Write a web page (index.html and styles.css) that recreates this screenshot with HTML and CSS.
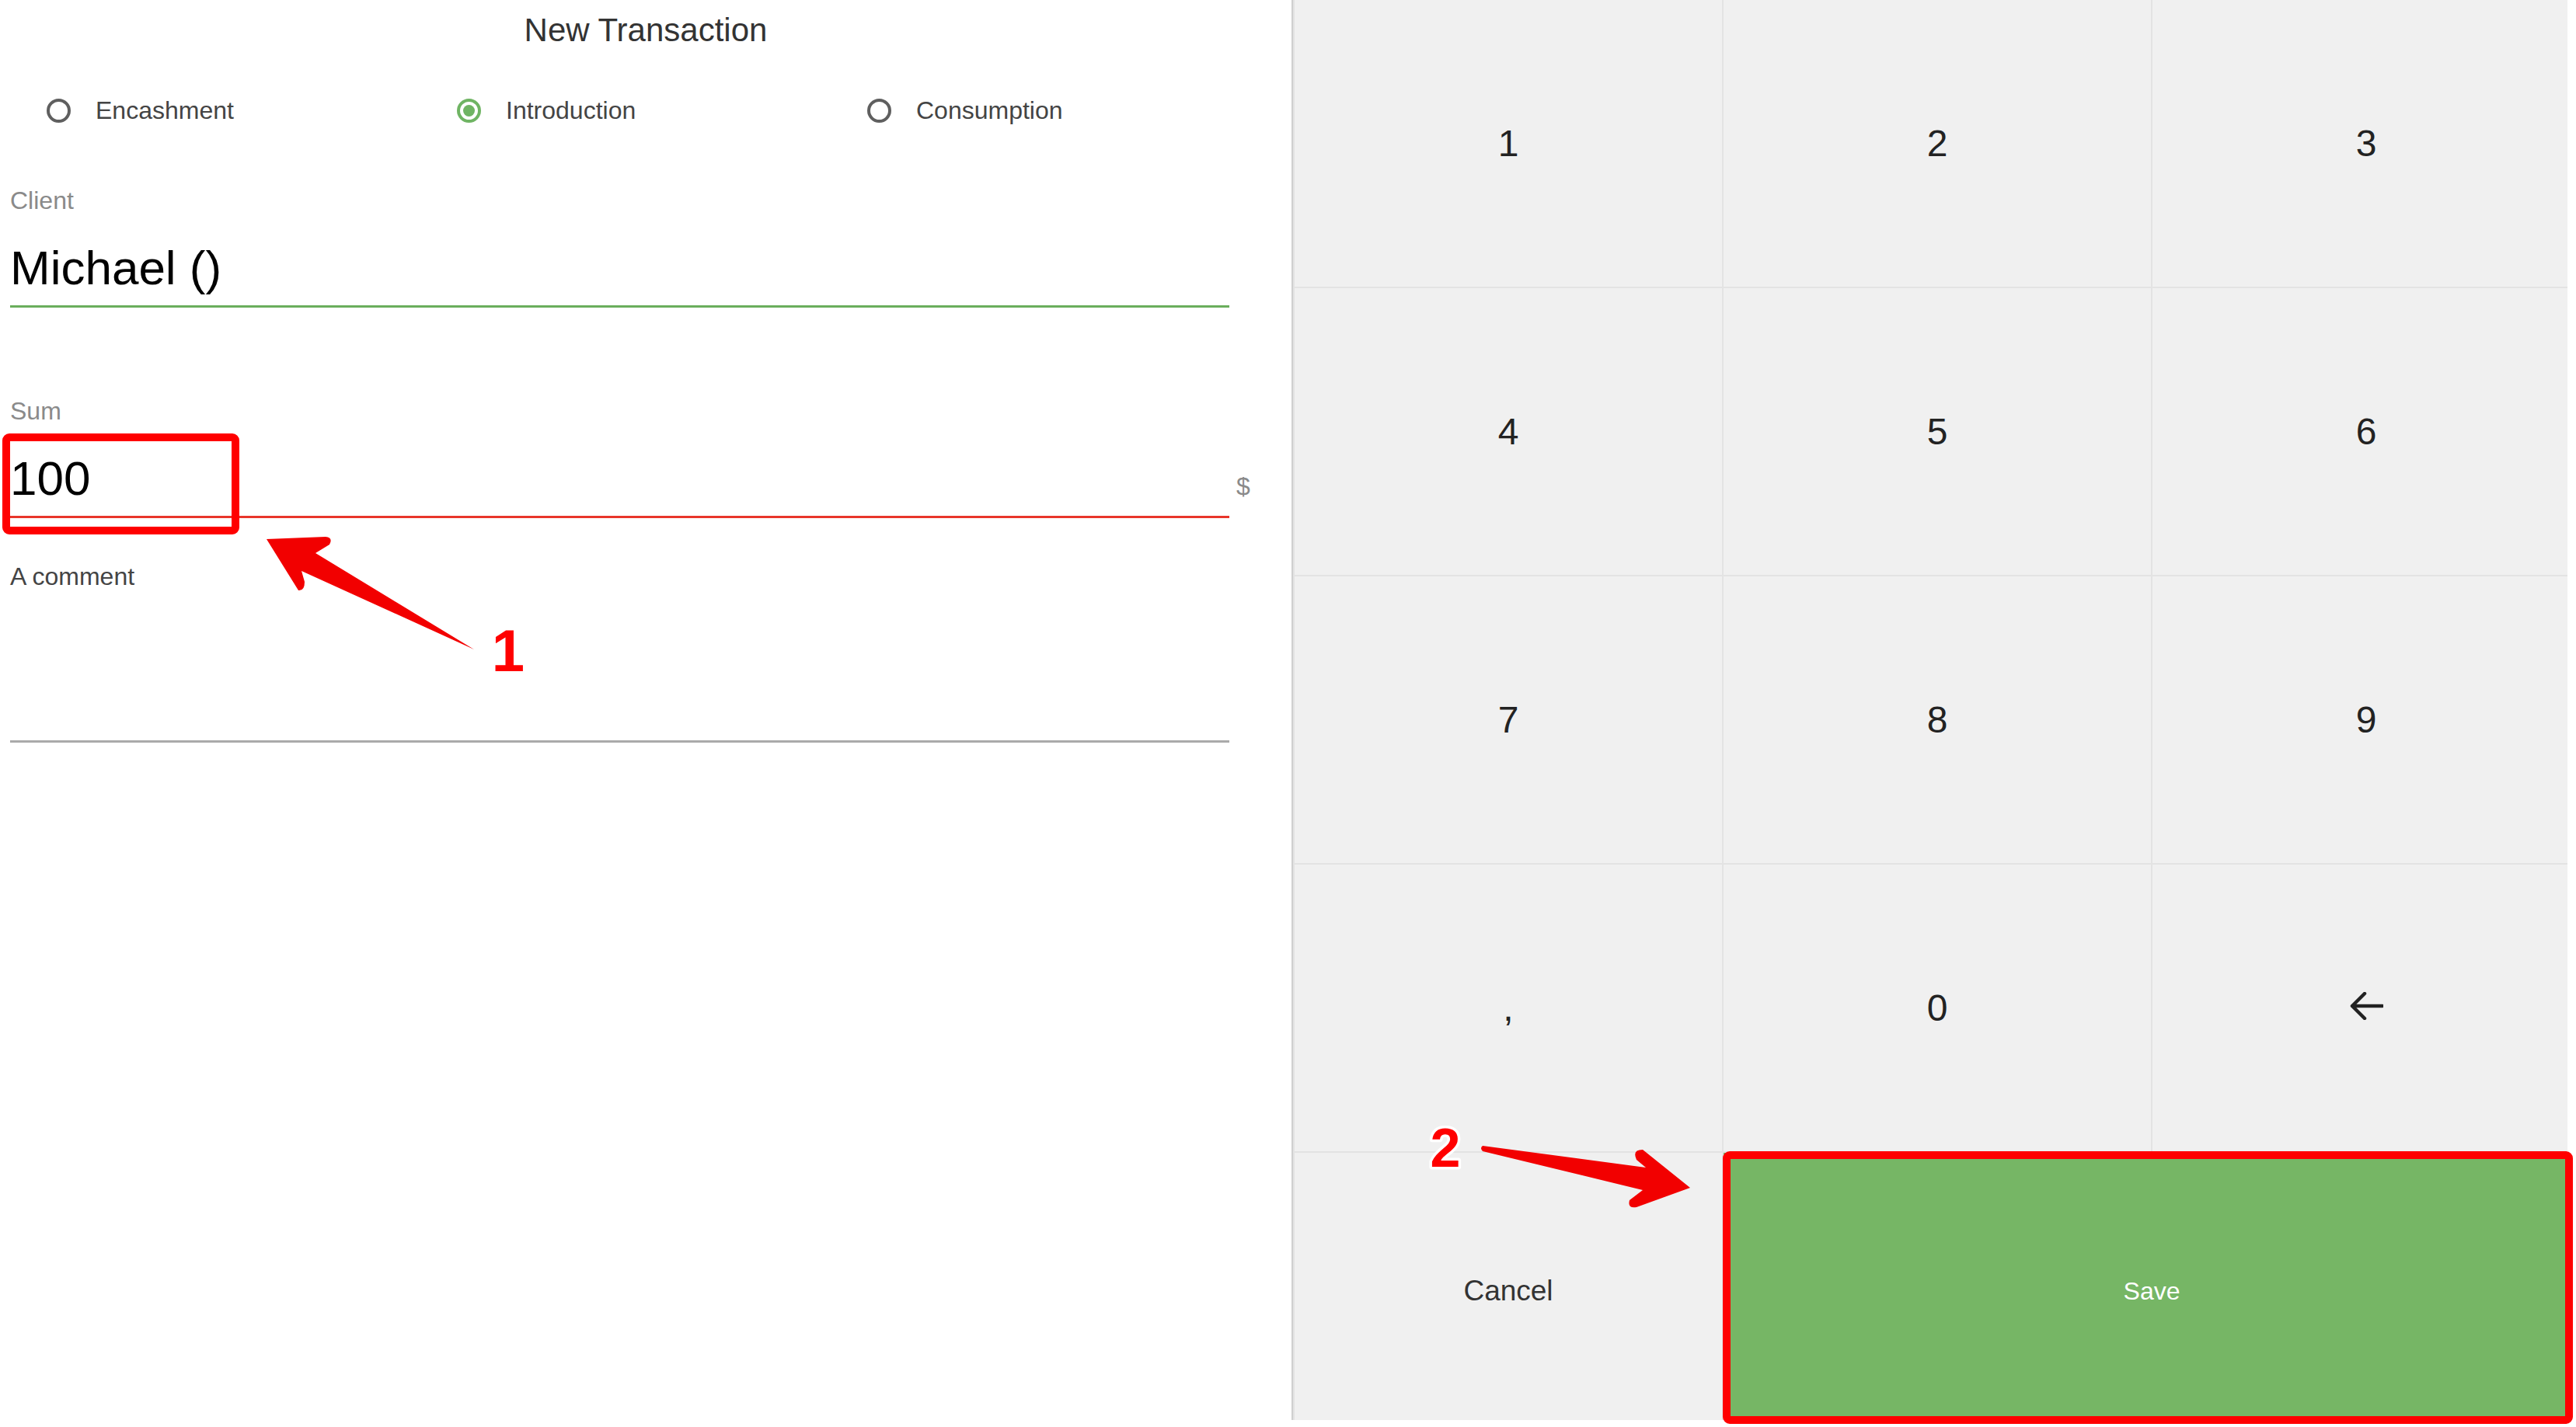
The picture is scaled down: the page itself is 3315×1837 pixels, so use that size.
FILE: index.html
```html
<!DOCTYPE html>
<html lang="en">
<head>
<meta charset="utf-8">
<title>New Transaction</title>
<link rel="stylesheet" href="styles.css">
</head>
<body>
<div class="app">
  <section class="form">
    <h1 class="title">New Transaction</h1>
    <div class="radios">
      <label class="radio"><span class="ring"></span><span>Encashment</span></label>
      <label class="radio"><span class="ring checked"></span><span>Introduction</span></label>
      <label class="radio"><span class="ring"></span><span>Consumption</span></label>
    </div>
    <div class="fields">
      <div class="field field-client">
        <div class="label">Client</div>
        <div class="input input-green">Michael ()</div>
      </div>
      <div class="field field-sum">
        <div class="label">Sum</div>
        <div class="sum-row">
          <div class="input input-red">100</div>
          <span class="suffix">$</span>
        </div>
      </div>
      <div class="field field-comment">
        <div class="label label-dark">A comment</div>
        <div class="textarea"></div>
      </div>
    </div>
  </section>
  <section class="keypad">
    <div class="key">1</div>
    <div class="key">2</div>
    <div class="key">3</div>
    <div class="key">4</div>
    <div class="key">5</div>
    <div class="key">6</div>
    <div class="key">7</div>
    <div class="key">8</div>
    <div class="key">9</div>
    <div class="key">,</div>
    <div class="key">0</div>
    <div class="key"><svg class="back" width="44" height="36" viewBox="0 0 44 36"><path d="M20 2 L4 18 L20 34 M4 18 H43" fill="none" stroke="#222" stroke-width="4.5" stroke-linecap="round" stroke-linejoin="round"/></svg></div>
    <div class="key key-cancel">Cancel</div>
    <div class="key key-save">Save</div>
  </section>
</div>
<svg class="annotations" width="3315" height="1837" viewBox="0 0 3315 1837">
  <rect x="8" y="563" width="295" height="120" rx="4" fill="none" stroke="#ff0000" stroke-width="10"/>
  <path d="M343 694 L419 691 Q429 692 424 701 L406 712 L610 836 L388 735 L392 749 Q392 761 384 760 Z" fill="#f20000"/>
  <text x="654" y="864" class="anno-num">1</text>
  <rect x="2222" y="1487" width="1084" height="341" rx="4" fill="none" stroke="#ff0000" stroke-width="10"/>
  <path d="M1908 1475 L2118 1503 L2106 1493 Q2100 1480 2114 1480 L2175 1529 L2106 1554 Q2094 1556 2097 1545 L2114 1532 L1908 1482 Q1904 1478 1908 1475 Z" fill="#f20000"/>
  <text x="1860" y="1502" class="anno-num anno-two">2</text>
</svg>
</body>
</html>
```

FILE: styles.css
```css
html, body {
  margin: 0;
  padding: 0;
  background: #ffffff;
}
body {
  position: relative;
  width: 3315px;
  height: 1837px;
  overflow: hidden;
  font-family: "Liberation Sans", Arial, Helvetica, sans-serif;
}
.app {
  display: flex;
  width: 3304px;
  height: 1828px;
  overflow: hidden;
}
.form {
  flex: none;
  width: 1662px;
  background: #ffffff;
}
.title {
  margin: 0;
  padding-top: 15px;
  font-size: 42px;
  line-height: 48px;
  font-weight: normal;
  text-align: center;
  color: #333333;
}
.radios {
  display: grid;
  grid-template-columns: repeat(3, 528px);
  margin-top: 59px;
  padding-left: 60px;
  height: 40px;
}
.radio {
  display: flex;
  align-items: center;
  gap: 32px;
  font-size: 32px;
  line-height: 40px;
  color: #444444;
}
.ring {
  flex: none;
  width: 31px;
  height: 31px;
  box-sizing: border-box;
  border: 4px solid #5f5f5f;
  border-radius: 50%;
  display: flex;
  align-items: center;
  justify-content: center;
}
.ring.checked {
  border-color: #6fb463;
}
.ring.checked::after {
  content: "";
  width: 15px;
  height: 15px;
  border-radius: 50%;
  background: #6fb463;
}
.fields {
  padding: 0 13px;
}
.field {
  width: 1569px;
}
.field-client {
  margin-top: 76px;
}
.field-sum {
  margin-top: 113px;
}
.field-comment {
  margin-top: 55px;
}
.label {
  font-size: 32px;
  line-height: 40px;
  color: #8a8a8a;
}
.label-dark {
  color: #444444;
}
.input {
  margin-top: 31px;
  padding-bottom: 12px;
  font-size: 62px;
  line-height: 72px;
  color: #000000;
}
.input-green {
  border-bottom: 3px solid #6aae5c;
}
.sum-row {
  display: flex;
  align-items: baseline;
  width: 1569px;
}
.input-red {
  flex: none;
  width: 1569px;
  border-bottom: 3px solid #e8352a;
}
.suffix {
  flex: none;
  margin-left: 9px;
  font-size: 32px;
  color: #8a8a8a;
}
.textarea {
  height: 191px;
  border-bottom: 3px solid #aaaaaa;
}
.keypad {
  flex: none;
  box-sizing: border-box;
  width: 1658px;
  height: 1840px;
  border-left: 2px solid #d0d0d0;
  padding-left: 2px;
  background: #e3e3e3;
  display: grid;
  grid-template-columns: repeat(3, 550px);
  grid-template-rows: repeat(4, 369px) 356px;
  gap: 2px;
}
.key {
  display: flex;
  align-items: center;
  justify-content: center;
  background: #f0f0f0;
  font-size: 48px;
  color: #222222;
}
.back {
  margin-top: -6px;
}
.key-cancel {
  font-size: 37px;
  color: #333333;
}
.key-save {
  grid-column: 2 / 4;
  background: #76b665;
  color: #ffffff;
  font-size: 32px;
}
.annotations {
  position: absolute;
  left: 0;
  top: 0;
  pointer-events: none;
}
.anno-num {
  font-family: "Liberation Sans", Arial, sans-serif;
  font-size: 76px;
  font-weight: bold;
  fill: #ff0000;
  stroke: #ffffff;
  stroke-width: 7px;
  stroke-linejoin: round;
  paint-order: stroke;
  text-anchor: middle;
}
.anno-two {
  font-size: 70px;
}
```
